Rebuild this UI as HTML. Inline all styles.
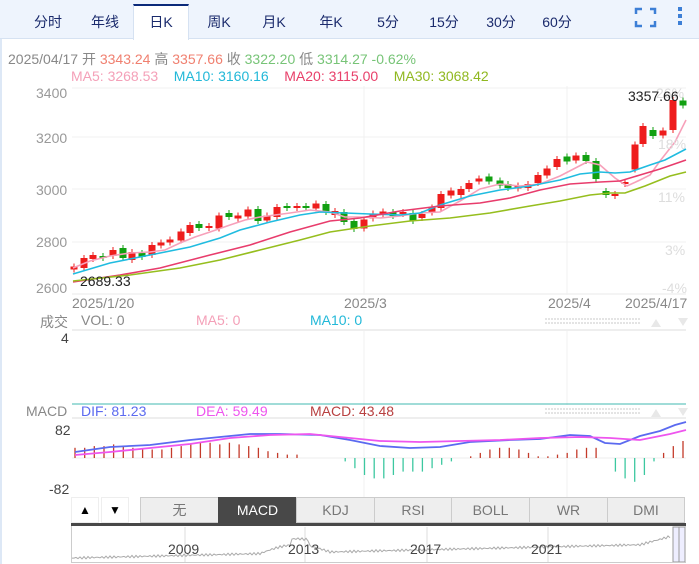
<!DOCTYPE html>
<html><head><meta charset="utf-8">
<style>
*{margin:0;padding:0;box-sizing:border-box}
body{width:699px;height:564px;overflow:hidden;background:#fff;font-family:"Liberation Sans","Noto Sans CJK SC",sans-serif;position:relative}
.hdr{position:absolute;left:0;top:0;width:699px;height:39px;background:#eef4fd;border-bottom:1px solid #d6e2f2}
.tab{position:absolute;top:12px;font-size:14px;color:#1a2a6c;transform:translateX(-50%);white-space:nowrap}
.sel{position:absolute;left:133px;top:4px;width:56px;height:36px;background:#fff;border-top:2px solid #0b2a7a;border-left:1px solid #d6e2f2;border-right:1px solid #d6e2f2}
.t{position:absolute;font-size:13px;white-space:nowrap}
.g{color:#888}
.btn{position:absolute;top:497px;height:26px;background:#eee;border:1px solid #ccc;font-size:14px;color:#777;text-align:center;line-height:24px}
</style></head><body>
<div style="position:absolute;left:0;top:0;width:2px;height:564px;background:#dde8f6"></div>
<div class="hdr"></div>
<div class="sel"></div>
<div class="tab" style="left:48px">分时</div>
<div class="tab" style="left:105px">年线</div>
<div class="tab" style="left:161px">日K</div>
<div class="tab" style="left:219px">周K</div>
<div class="tab" style="left:274px">月K</div>
<div class="tab" style="left:331px">年K</div>
<div class="tab" style="left:388px">5分</div>
<div class="tab" style="left:444px">15分</div>
<div class="tab" style="left:501px">30分</div>
<div class="tab" style="left:557px">60分</div>
<svg style="position:absolute;left:0;top:0" width="699" height="40">
<path d="M636 14V9H642M650 9H655V14M655 21V26H650M642 26H636V21" stroke="#3d7fd6" stroke-width="2.5" fill="none"/>
<rect x="678" y="7" width="4" height="4" fill="#3d7fd6"/><rect x="678" y="14" width="4" height="4" fill="#3d7fd6"/><rect x="678" y="21" width="4" height="4" fill="#3d7fd6"/>
</svg>
<div class="t" style="left:8px;top:49px;font-size:14px"><span class="g">2025/04/17 开 </span><span style="color:#f08070">3343.24</span><span class="g"> 高 </span><span style="color:#f08070">3357.66</span><span class="g"> 收 </span><span style="color:#77c477">3322.20</span><span class="g"> 低 </span><span style="color:#77c477">3314.27</span><span style="color:#77c477"> -0.62%</span></div>
<div class="t" style="left:71px;top:68px;font-size:14px"><span style="color:#f4a0b8">MA5: 3268.53</span>&nbsp;&nbsp;&nbsp;&nbsp;<span style="color:#22b8d8">MA10: 3160.16</span>&nbsp;&nbsp;&nbsp;&nbsp;<span style="color:#e8406a">MA20: 3115.00</span>&nbsp;&nbsp;&nbsp;&nbsp;<span style="color:#90b820">MA30: 3068.42</span></div>
<svg id="c" style="position:absolute;left:0;top:0" width="699" height="564"></svg>
<div class="t g" style="left:36px;top:85px;font-size:14px;color:#999">3400</div>
<div class="t g" style="left:36px;top:130px;font-size:14px;color:#999">3200</div>
<div class="t g" style="left:36px;top:182px;font-size:14px;color:#999">3000</div>
<div class="t g" style="left:36px;top:234px;font-size:14px;color:#999">2800</div>
<div class="t g" style="left:36px;top:280px;font-size:14px;color:#999">2600</div>
<div class="t" style="left:656px;top:85px;font-size:14px;color:#ddd">26%</div>
<div class="t" style="left:658px;top:136px;font-size:14px;color:#ddd">18%</div>
<div class="t" style="left:658px;top:189px;font-size:14px;color:#ddd">11%</div>
<div class="t" style="left:665px;top:242px;font-size:14px;color:#ddd">3%</div>
<div class="t" style="left:662px;top:280px;font-size:14px;color:#ddd">-4%</div>
<div class="t" style="left:628px;top:88px;font-size:14px;color:#222">3357.66</div>
<div class="t" style="left:80px;top:273px;font-size:14px;color:#222">2689.33</div>
<div class="t g" style="left:72px;top:295px;font-size:14px">2025/1/20</div>
<div class="t g" style="left:344px;top:295px;font-size:14px">2025/3</div>
<div class="t g" style="left:548px;top:295px;font-size:14px">2025/4</div>
<div class="t g" style="left:625px;top:295px;font-size:14px">2025/4/17</div>
<div class="t" style="left:40px;top:312px;font-size:14px"><span class="g">成交</span></div>
<div class="t g" style="left:81px;top:312px;font-size:14px">VOL: 0</div>
<div class="t" style="left:196px;top:312px;font-size:14px;color:#f4a0b8">MA5: 0</div>
<div class="t" style="left:310px;top:312px;font-size:14px;color:#22b8d8">MA10: 0</div>
<div class="t" style="left:61px;top:330px;font-size:14px;color:#444">4</div>
<div class="t g" style="left:26px;top:403px;font-size:14px">MACD</div>
<div class="t" style="left:81px;top:403px;font-size:14px;color:#5b6af0">DIF: 81.23</div>
<div class="t" style="left:196px;top:403px;font-size:14px;color:#ee55ee">DEA: 59.49</div>
<div class="t" style="left:310px;top:403px;font-size:14px;color:#b84040">MACD: 43.48</div>
<div class="t" style="left:55px;top:422px;font-size:14px;color:#444">82</div>
<div class="t" style="left:49px;top:481px;font-size:14px;color:#444">-82</div>
<div class="btn" style="left:71px;width:28px;background:#fff;border-color:#eee;color:#000;font-size:12px">▲</div>
<div class="btn" style="left:101px;width:28px;background:#fff;border-color:#eee;color:#000;font-size:12px">▼</div>
<div class="btn" style="left:140px;width:79px">无</div>
<div class="btn" style="left:218px;width:79px;background:#484848;color:#fff;border-color:#484848">MACD</div>
<div class="btn" style="left:296px;width:79px">KDJ</div>
<div class="btn" style="left:374px;width:78px">RSI</div>
<div class="btn" style="left:451px;width:79px">BOLL</div>
<div class="btn" style="left:529px;width:79px">WR</div>
<div class="btn" style="left:607px;width:78px">DMI</div>
<div style="position:absolute;left:71px;top:523px;width:615px;height:3px;background:#484848"></div>
<div style="position:absolute;left:71px;top:526px;width:615px;height:37px;border:1px solid #ccc;border-top:none"></div>
<div class="t" style="left:168px;top:541px;font-size:14px;color:#444">2009</div>
<div class="t" style="left:288px;top:541px;font-size:14px;color:#444">2013</div>
<div class="t" style="left:410px;top:541px;font-size:14px;color:#444">2017</div>
<div class="t" style="left:531px;top:541px;font-size:14px;color:#444">2021</div>
<script>
var s=document.getElementById('c'),h='';
function L(x1,y1,x2,y2,c,w){h+='<line x1="'+x1+'" y1="'+y1+'" x2="'+x2+'" y2="'+y2+'" stroke="'+c+'" stroke-width="'+(w||1)+'"/>';}
function P(pts,c,w){h+='<polyline points="'+pts+'" fill="none" stroke="'+c+'" stroke-width="'+(w||1.6)+'"/>';}
[88,137,189,242,294].forEach(function(y){L(72,y,686,y,'#f0f0f0');});
L(72,294,686,294,'#e8e8e8');
[364,567].forEach(function(x){L(x,86,x,295,'#f0f0f0');L(x,330,x,405,'#f0f0f0');L(x,418,x,500,'#f0f0f0');});
L(72,330,686,330,'#eee',2);L(72,418,686,418,'#eee',2);
[[545,318],[545,408]].forEach(function(p){for(var i=0;i<2;i++)for(var x=p[0];x<640;x+=3)h+='<rect x="'+x+'" y="'+(p[1]+i*4)+'" width="2" height="2" fill="#e4e4e4"/>';
h+='<path d="M651 '+(p[1]+9)+'l5 -8l5 8z" fill="#e8e8e8"/><path d="M678 '+(p[1])+'l5 8l5 -8z" fill="#e8e8e8"/>';});
L(72,404,686,404,'#40b8b0',1);
var xs=[74,84,93,103,113,123,132,142,152,161,170,181,190,199,209,219,229,238,248,258,267,277,287,297,306,316,326,335,344,354,364,373,383,393,403,413,422,432,441,451,461,469,479,489,500,508,518,528,538,547,557,567,576,586,596,606,615,625,635,643,653,663,673,683];
var ys=[268,263,257,257,253,253,256,255,250,244,241,236,229,226,227,222,215,217,213,215,218,212,207,207,207,206,208,213,217,225,224,216,213,214,213,217,216,210,201,193,192,186,180,179,183,186,187,186,179,172,163,159,158,158,170,193,195,183,157,135,133,133,115,103];
var col=[1,1,1,0,1,0,1,0,1,1,1,1,1,0,1,1,0,1,1,0,1,1,0,1,0,1,0,1,0,0,1,1,1,0,1,0,1,1,1,1,1,1,1,0,0,0,1,1,1,1,1,0,1,0,0,0,1,1,1,1,0,1,1,0];
var bh=[3,10,4,2,6,10,8,4,10,3,3,9,8,4,2,13,4,3,7,12,5,10,2,2,2,5,8,4,10,8,9,5,3,4,2,8,4,5,14,5,6,6,3,5,5,4,3,4,8,7,8,5,5,6,18,4,2,2,25,18,6,5,30,5];
xs.forEach(function(x,i){var c=col[i]?'#ee1c1c':'#11a011';var y=ys[i],b=Math.max(2,bh[i]);
L(x,y-b/2-3,x,y+b/2+3,c,1);h+='<rect x="'+(x-3.5)+'" y="'+(y-b/2)+'" width="7" height="'+b+'" fill="'+c+'"/>';});
P("73,268 90,261 110,256 130,253 150,252 165,250 180,243 195,237 210,232 230,225 245,220 260,217 290,213 310,210 330,212 345,217 360,217 380,218 400,216 420,213 440,212 460,201 480,189 500,184 520,186 540,184 560,176 587,162 600,165 615,178 627,186 640,180 650,175 660,161 675,142 686,120",'#f7a0ba');
P("73,274 110,263 150,255 190,247 220,238 240,230 270,222 300,215 320,212 345,213 370,214 400,215 420,213 440,205 470,196 500,190 530,186 560,180 580,174 600,172 615,173 630,172 650,165 665,160 686,149",'#20bce0');
P("73,282 120,275 160,268 210,255 250,245 290,232 330,221 360,218 400,211 440,206 480,203 510,198 540,190 570,184 600,182 620,181 640,175 660,169 686,160",'#e83c6c');
P("73,281 130,275 180,268 220,260 260,250 300,240 330,232 370,226 410,221 450,218 490,213 530,206 560,201 590,195 610,193 625,193 645,186 670,176 686,172",'#96be1e');
L(72,458,686,458,'#eee');
var mb=[6,6,7,7,8,7,6,5,5,5,6,7,8,9,9,8,9,8,7,6,4,3,2,2,0,0,0,0,-2,-6,-10,-12,-12,-10,-8,-8,-8,-6,-4,-2,0,1,3,5,6,6,5,3,1,1,2,3,5,6,6,0,-8,-12,-14,-10,-2,3,7,10,12,14];
for(var i=0;i<64;i++){var x=75+i*9.65,v=mb[i];if(!v)continue;var c=v>0?'#c43a2a':'#3cc8a0';L(x.toFixed(1),458,x.toFixed(1),458-v*1.7,c,1.3);}
P("75,452 110,447 150,445 190,440 230,436 250,434 280,434 320,435 350,440 380,446 410,448 440,447 470,442 510,440 540,439 570,435 590,436 605,443 620,444 640,436 660,431 675,425 686,422",'#5b6af0',1.8);
P("75,455 110,452 150,448 190,444 230,438 270,435 310,434 340,437 380,441 420,442 460,441 500,440 540,438 580,437 610,438 640,440 670,434 686,430",'#ee55ee',1.8);
[185,305,427,548].forEach(function(x){L(x,527,x,563,'#ddd');});
var pts=[];for(var x=72;x<672;x+=2){var t=(x-72)/600;var base=558-t*14-(x>260&&x<330?8*Math.sin((x-260)/70*Math.PI):0)-(x>640?(x-640)*0.25:0)-(x>290&&x<310?6:0);pts.push(x+','+(base+Math.sin(x*1.7)*1.2).toFixed(1));}
P(pts.join(' '),'#aaa',1);
h+='<rect x="673" y="527" width="6" height="35" fill="#eef" stroke="#999"/><rect x="679" y="527" width="6" height="35" fill="#eef" stroke="#999"/>';
s.innerHTML=h;
</script>
</body></html>
